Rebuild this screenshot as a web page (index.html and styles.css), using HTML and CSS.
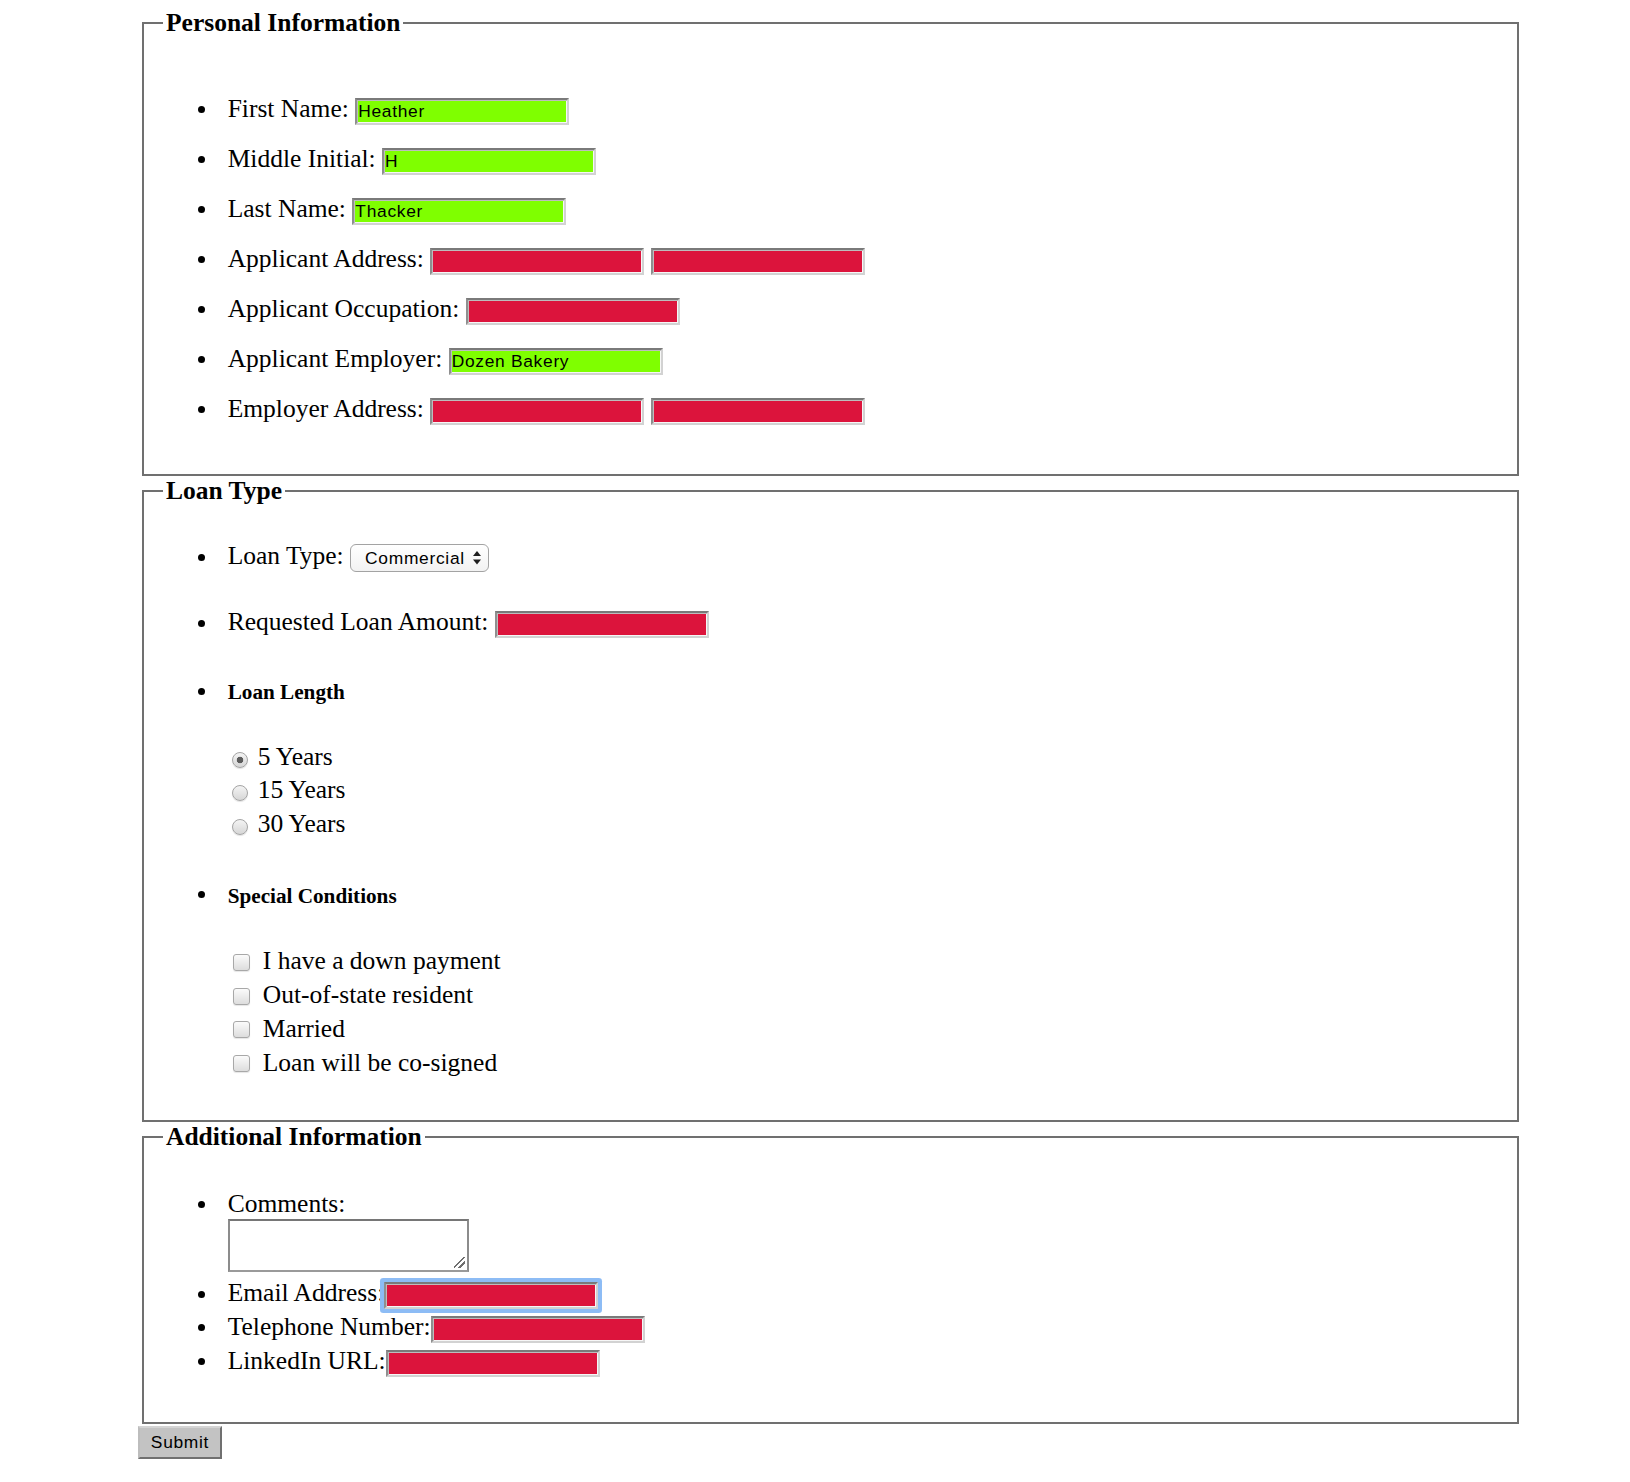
FILE: index.html
```html
<!DOCTYPE html>
<html lang="en">
<head>
<meta charset="utf-8">
<title>Loan Application</title>
<link rel="stylesheet" href="styles.css">
</head>
<body>
<form class="loan-form">
  <fieldset class="section personal">
    <legend>Personal Information</legend>
    <ul class="fields">
      <li>First Name: <input type="text" class="field ok" value="Heather"></li>
      <li>Middle Initial: <input type="text" class="field ok" value="H"></li>
      <li>Last Name: <input type="text" class="field ok" value="Thacker"></li>
      <li>Applicant Address: <input type="text" class="field bad"> <input type="text" class="field bad"></li>
      <li>Applicant Occupation: <input type="text" class="field bad"></li>
      <li>Applicant Employer: <input type="text" class="field ok" value="Dozen Bakery"></li>
      <li>Employer Address: <input type="text" class="field bad"> <input type="text" class="field bad"></li>
    </ul>
  </fieldset>

  <fieldset class="section loan">
    <legend>Loan Type</legend>
    <ul class="fields">
      <li class="row-select">Loan Type: <span class="select-wrap"><select class="dropdown"><option>Commercial</option><option>Personal</option><option>Mortgage</option></select><svg class="arrows" width="8" height="14" viewBox="0 0 8 14" aria-hidden="true"><polygon points="0,5 4,0 8,5" fill="#1e1e1e"/><polygon points="0,8.5 8,8.5 4,13.5" fill="#1e1e1e"/></svg></span></li>
      <li class="row-amount">Requested Loan Amount: <input type="text" class="field bad"></li>
      <li class="sub sub-length">
        <div class="sub-title">Loan Length</div>
        <div class="options radios">
          <label class="opt"><input type="radio" name="length" class="radio" checked>5 Years</label>
          <label class="opt"><input type="radio" name="length" class="radio">15 Years</label>
          <label class="opt"><input type="radio" name="length" class="radio">30 Years</label>
        </div>
      </li>
      <li class="sub sub-cond">
        <div class="sub-title">Special Conditions</div>
        <div class="options checks">
          <label class="opt"><input type="checkbox" class="check">I have a down payment</label>
          <label class="opt"><input type="checkbox" class="check">Out-of-state resident</label>
          <label class="opt"><input type="checkbox" class="check">Married</label>
          <label class="opt"><input type="checkbox" class="check">Loan will be co-signed</label>
        </div>
      </li>
    </ul>
  </fieldset>

  <fieldset class="section extra">
    <legend>Additional Information</legend>
    <ul class="fields">
      <li class="row-comments">Comments:<textarea class="comments"></textarea></li>
      <li class="row-contact row-email">Email Address:<input type="text" class="field bad focus"></li>
      <li class="row-contact">Telephone Number:<input type="text" class="field bad"></li>
      <li class="row-contact">LinkedIn URL:<input type="text" class="field bad"></li>
    </ul>
  </fieldset>

  <button type="button" class="submit">Submit</button>
</form>
</body>
</html>
```

FILE: styles.css
```css
* {
  box-sizing: border-box;
}

html,
body {
  margin: 0;
  padding: 0;
  background: #ffffff;
}

body {
  font-family: "Liberation Serif", "Times New Roman", serif;
  font-size: 25.5px;
  color: #000000;
}

.loan-form {
  width: 1385px;
  margin: 0 0 0 138px;
  padding-top: 8px;
}

.section {
  margin: 0 4px;
  padding: 0 19px;
  border: 2px solid #707070;
  min-width: 0;
}

.section legend {
  padding: 0 3px;
  font-weight: bold;
  font-size: 25.5px;
  line-height: 30px;
}

.fields {
  margin: 0;
  padding: 0 0 0 64.7px;
  list-style: none;
}

.fields li {
  line-height: 30px;
}

/* Bullets drawn in the text flow */
.fields li::before,
.fields li.sub .sub-title::before {
  content: "";
  display: inline-block;
  width: 7px;
  height: 7px;
  margin: 0 22.5px 0 -29.5px;
  border-radius: 50%;
  background: #000000;
  vertical-align: 3.8px;
}

.fields li.sub::before {
  content: none;
}

.fields li.sub .sub-title::before {
  vertical-align: 4.6px;
}

/* Personal information */
.personal .fields {
  margin: 45.7px 0 40.3px;
}

.personal .fields li {
  line-height: 50px;
}

/* Text fields */
.field {
  width: 214px;
  height: 27px;
  margin: 0;
  padding: 0 1px;
  border: 2px solid;
  border-color: #7a7a7a #d2d2d2 #d2d2d2 #8f8f8f;
  box-shadow: inset 1px 1px 0 #bdbdbd, inset -1px -1px 0 #f6f6f6;
  border-radius: 0;
  font-family: "Liberation Sans", Arial, sans-serif;
  font-size: 17.4px;
  letter-spacing: 0.7px;
  color: #000000;
  vertical-align: baseline;
}

.field.ok {
  background: #7fff00;
}

.field.bad {
  background: #dc143c;
}

.field.focus {
  border-radius: 1px;
  box-shadow: inset 1px 1px 0 #bdbdbd, inset -1px -1px 0 #f6f6f6, 0 0 0 4px #8dbcf5;
}

/* Loan type */
.loan .fields {
  margin: 35.4px 0 40.4px;
}

.row-amount {
  margin-top: 35px;
}

.select-wrap {
  position: relative;
  display: inline-flex;
}

.dropdown {
  appearance: none;
  -webkit-appearance: none;
  width: 139px;
  height: 28px;
  margin: 0;
  padding: 0 0 0 14px;
  border: 1.5px solid #a3a3a3;
  border-radius: 6px;
  background: linear-gradient(#ffffff, #f2f2f2);
  font-family: "Liberation Sans", Arial, sans-serif;
  font-size: 17.4px;
  letter-spacing: 0.7px;
  color: #000000;
}

.arrows {
  position: absolute;
  right: 8px;
  top: 7px;
  pointer-events: none;
}

.fields li.sub {
  line-height: 20px;
}

.sub-length {
  margin-top: 42px;
}

.sub-cond {
  margin-top: 43.2px;
}

.sub-title {
  font-size: 21.2px;
  font-weight: bold;
  line-height: 25px;
}

.options {
  line-height: 33.75px;
}

.radios {
  margin-top: 34.2px;
}

.checks {
  margin-top: 35.3px;
}

.opt {
  display: block;
}

.radio {
  appearance: none;
  -webkit-appearance: none;
  width: 16px;
  height: 16px;
  margin: 0 9.7px 0 4.3px;
  border: 1px solid #a4a4a4;
  border-radius: 50%;
  background: linear-gradient(#f4f4f4, #d6d6d6);
  box-shadow: 0 1px 1px rgba(0, 0, 0, 0.12);
  vertical-align: -3px;
}

.radio:checked {
  background: radial-gradient(circle, #5c5c5c 0 3px, rgba(92, 92, 92, 0) 3.6px), linear-gradient(#f4f4f4, #d6d6d6);
}

.check {
  appearance: none;
  -webkit-appearance: none;
  width: 17px;
  height: 17px;
  margin: 0 13.2px 0 4.9px;
  border: 1px solid #a8a8a8;
  border-radius: 3px;
  background: linear-gradient(#fbfbfb, #dddddd);
  box-shadow: 0 1px 1px rgba(0, 0, 0, 0.1);
  vertical-align: -1.5px;
}

/* Additional information */
.extra .fields {
  margin: 37.1px 0 45.4px;
}

.comments {
  display: block;
  width: 241px;
  height: 53px;
  margin: 0;
  padding: 2px;
  border: 2px solid;
  border-color: #767676 #8c8c8c #9a9a9a #8c8c8c;
  background-color: #ffffff;
  background-image: linear-gradient(135deg, rgba(0, 0, 0, 0) 0 44%, #6f6f6f 44% 54%, rgba(0, 0, 0, 0) 54% 68%, #6f6f6f 68% 78%, rgba(0, 0, 0, 0) 78%);
  background-size: 11px 11px;
  background-position: right 2px bottom 2px;
  background-repeat: no-repeat;
  resize: none;
}

.row-email {
  margin-top: 6.6px;
}

.row-contact + .row-contact {
  margin-top: 2.8px;
}

/* Submit */
.submit {
  display: block;
  width: 84px;
  height: 33px;
  margin: 2px 0 0 0;
  padding: 0;
  border: 2px solid;
  border-color: #d4d4d4 #707070 #707070 #bdbdbd;
  background: #c3c3c3;
  font-family: "Liberation Sans", Arial, sans-serif;
  font-size: 17.4px;
  letter-spacing: 0.7px;
  color: #000000;
}
```
